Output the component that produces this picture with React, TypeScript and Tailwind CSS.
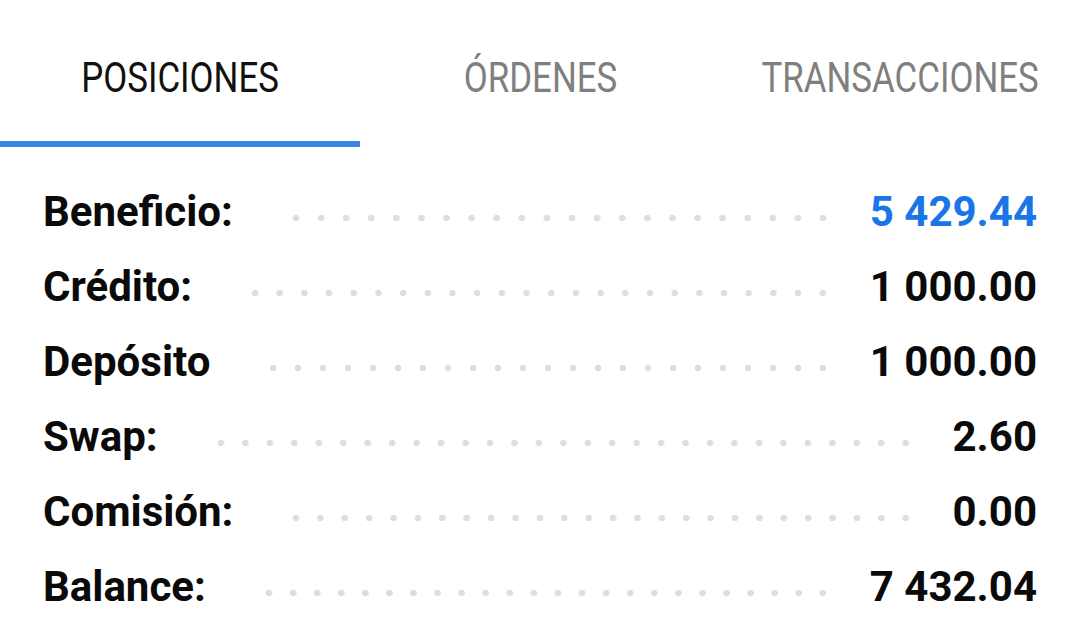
import React from "react";

const rows: { label: string; value: string; blue?: boolean }[] = [
  { label: "Beneficio:", value: "5 429.44", blue: true },
  { label: "Crédito:", value: "1 000.00" },
  { label: "Depósito", value: "1 000.00" },
  { label: "Swap:", value: "2.60" },
  { label: "Comisión:", value: "0.00" },
  { label: "Balance:", value: "7 432.04" },
];

const tabs = ["POSICIONES", "ÓRDENES", "TRANSACCIONES"];

export default function App() {
  return (
    <div className="w-[1080px] h-[625px] overflow-hidden bg-white font-['Roboto',sans-serif]">
      <div className="grid grid-cols-3">
        {tabs.map((t, i) => (
          <div key={t} className="flex flex-col">
            <div
              className={`h-[141px] pt-[57px] flex justify-center text-[42px] leading-[42px] ${
                i === 0 ? "text-[#111111]" : "text-[#7f7f7f]"
              }`}
            >
              <span className="inline-block scale-x-[0.83] whitespace-nowrap">{t}</span>
            </div>
            <div className={`h-[6px] ${i === 0 ? "bg-[#3d85e8]" : "bg-transparent"}`} />
          </div>
        ))}
      </div>
      <div className="pt-[27px] px-[43px] flex flex-col">
        {rows.map((r) => (
          <div key={r.label} className="h-[75px] flex items-center">
            <span className="text-[42px] leading-[75px] font-bold text-[#0a0a0a] whitespace-nowrap">
              {r.label}
            </span>
            <div className="flex-1 h-[8px] mt-[13px] ml-[51px] mr-[35px] bg-[radial-gradient(circle,#dedede_3px,transparent_3.6px)] bg-[length:24px_8px] bg-repeat-space" />
            <span
              className={`text-[42px] leading-[75px] font-bold whitespace-nowrap ${
                r.blue ? "text-[#1a76e6]" : "text-[#0a0a0a]"
              }`}
            >
              {r.value}
            </span>
          </div>
        ))}
      </div>
    </div>
  );
}
